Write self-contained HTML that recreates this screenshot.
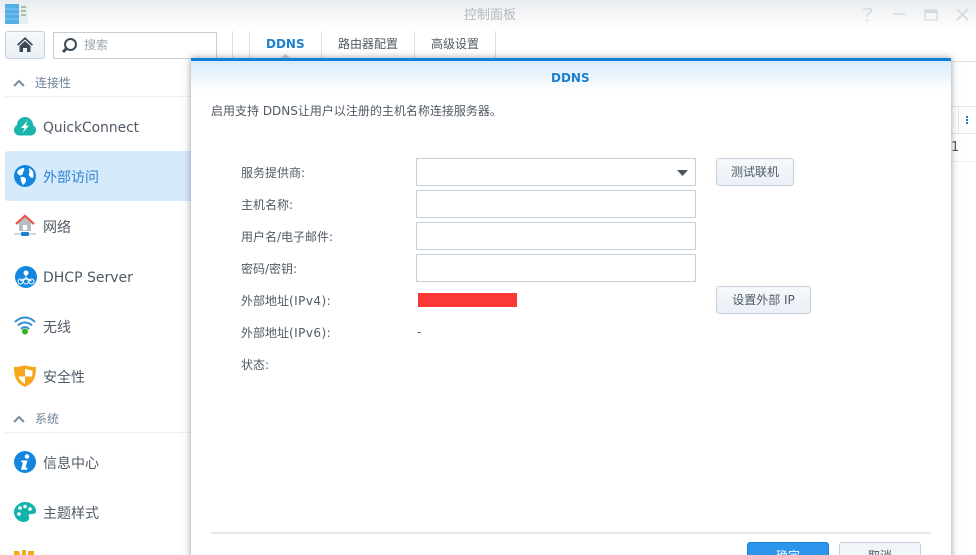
<!DOCTYPE html>
<html><head><meta charset="utf-8">
<style>
html,body{margin:0;padding:0;width:976px;height:555px;overflow:hidden}
body{background:#fff;font-family:"DejaVu Sans","Noto Sans CJK SC",sans-serif;color:#505a64}
#w{position:relative;width:976px;height:555px;overflow:hidden;background:#fff}
.a,.t{position:absolute}
.t{white-space:nowrap;line-height:16px}
.s{font-size:14px;left:43px;color:#505a64}
.h{font-size:12px;left:35px;color:#6d8398}
.l{font-size:12px;left:241px;color:#505a64}
.l span{letter-spacing:.45px}
.i{position:absolute;left:416px;width:278px;height:26px;border:1px solid #c6ced6;background:#fff}
.b{position:absolute;height:26px;border:1px solid #c6d0da;border-radius:3px;background:linear-gradient(#f6f9fc,#e9eff5);font-size:12px;color:#505a64;text-align:center;line-height:26px}
svg{position:absolute;overflow:visible}
</style></head><body><div id="w">
<div class="a" style="left:0;top:0;width:976px;height:30px;background:linear-gradient(#e9ecef,#fff)"></div>
<svg style="left:5px;top:4px" width="24" height="21" viewBox="0 0 24 21"><rect width="14" height="20" y="0" fill="#55aee6"/><rect x="14" width="9" height="20" fill="#e6eef2"/><path d="M0 5h14M0 10h14M0 15h14" stroke="#86c6ee"/><path d="M16 3h5M16 7h5M16 11h5" stroke="#8b9a80" stroke-width="1.200"/></svg>
<div class="t" style="left:464px;top:8px;font-size:13px;color:#b6babe">控制面板</div>
<svg style="left:860px;top:6px" width="110" height="16" viewBox="0 0 110 16" fill="none" stroke="#d6dade" stroke-width="1.600"><path d="M3 3h8v3l-4 3v2M7 13v2"/><path d="M33 8h12"/><path d="M65 4h12v10H65z" stroke-width="1.300"/><path d="M65 5.500h12" stroke-width="3"/><path d="M97 3l11 11M108 3L97 14"/></svg>

<div class="a" style="left:5px;top:31px;width:38px;height:26px;border:1px solid #c6d0da;border-radius:3px;background:linear-gradient(#f6f9fc,#e9eff5)"></div>
<svg style="left:17px;top:37px" width="16" height="15" viewBox="0 0 16 15"><path d="M8 0L0 7.500l1.200 1.300L8 2.500l6.800 6.300L16 7.500z" fill="#3e4a56"/><path d="M2.500 9L8 4l5.500 5v6h-3.500v-4H6v4H2.500z" fill="#3e4a56"/></svg>
<div class="a" style="left:53px;top:32px;width:162px;height:25px;border:1px solid #c6ced6;background:#fff"></div>
<svg style="left:61px;top:37px" width="18" height="18" viewBox="0 0 18 18" fill="none"><circle cx="9.500" cy="7.500" r="5.500" stroke="#3e4a56" stroke-width="2"/><path d="M5.500 11.500L2 15" stroke="#3e4a56" stroke-width="3"/></svg>
<div class="t" style="left:84px;top:37px;font-size:12px;color:#9aa5b0">搜索</div>
<div class="a" style="left:232px;top:31px;width:1px;height:27px;background:#dde1e5"></div>
<div class="a" style="left:249px;top:31px;width:1px;height:27px;background:#dde1e5"></div>
<div class="a" style="left:321px;top:31px;width:1px;height:27px;background:#dde1e5"></div>
<div class="a" style="left:414px;top:31px;width:1px;height:27px;background:#dde1e5"></div>
<div class="a" style="left:495px;top:31px;width:1px;height:27px;background:#dde1e5"></div>
<div class="t" style="left:266px;top:36px;font-size:12px;font-weight:bold;color:#1f7fd0">DDNS</div>
<svg style="left:281px;top:54px" width="9" height="4" viewBox="0 0 9 4"><path d="M0 4L4.500 0 9 4z" fill="#c9ced3"/></svg>
<div class="t" style="left:338px;top:36px;font-size:12px;color:#505a64">路由器配置</div>
<div class="t" style="left:431px;top:36px;font-size:12px;color:#505a64">高级设置</div>

<svg style="left:13px;top:79px" width="12" height="8" viewBox="0 0 12 8" fill="none"><path d="M1 7l5-5 5 5" stroke="#7a8b9b" stroke-width="2"/></svg>
<div class="t h" style="top:75px">连接性</div>
<div class="a" style="left:5px;top:96px;width:186px;height:1px;background:#eceef0"></div>
<svg style="left:14px;top:116px" width="22" height="21" viewBox="0 0 22 21"><circle cx="11" cy="9" r="8" fill="#19b4ac"/><circle cx="5.500" cy="14" r="5.500" fill="#19b4ac"/><circle cx="16.500" cy="14" r="5.500" fill="#19b4ac"/><rect x="5" y="12" width="12" height="7.500" fill="#19b4ac"/><path d="M14 4L7 12h3.500L8.500 17 15 9.500h-3.500z" fill="#fff"/></svg>
<div class="t s" style="top:120px;font-size:13.800px">QuickConnect</div>

<div class="a" style="left:5px;top:151px;width:186px;height:50px;background:#d6eafc;border-radius:3px 0 0 3px"></div>
<svg style="left:14px;top:165px" width="22" height="22" viewBox="0 0 22 22"><circle cx="11" cy="11" r="11" fill="#1387e0"/><path d="M3 7c2-3 5-4 7-4 1 2-1 3-1 5s-3 3-4 2-2-2-2-3zM7 12c2-.5 5 0 5 3s-2 4-3 5c-1-2-2-3-2-4.500S6 12 7 12zM15 3c2 1 4 3 4.500 5 0 2 0 4-.5 5-2 0-3-1-4-2.500s1-2.500.5-4S15 4 15 3z" fill="#fff"/></svg>
<div class="t s" style="top:170px;color:#2c83d6">外部访问</div>

<svg style="left:14px;top:213px" width="22" height="24" viewBox="0 0 22 24"><path d="M5 10l6-5 6 5v8H5z" fill="#b4bfca"/><rect x="9" y="12" width="4" height="5" fill="#fff"/><path d="M2 11l9-8 9 8" fill="none" stroke="#e85a50" stroke-width="2.500"/><path d="M0 21h22" stroke="#9fb0c0"/><rect x="7" y="19" width="8" height="4" fill="#1f7fd0" rx="1"/></svg>
<div class="t s" style="top:220px">网络</div>

<svg style="left:15px;top:266px" width="22" height="22" viewBox="0 0 22 22"><circle cx="11" cy="11" r="11" fill="#1387e0"/><circle cx="11" cy="7" r="2.500" fill="#fff"/><path d="M11 9v4M5.500 15l5.500-3 5.500 3" stroke="#fff" fill="none"/><circle cx="5.500" cy="15.500" r="2.500" fill="none" stroke="#fff"/><circle cx="11" cy="15.500" r="2.500" fill="none" stroke="#fff"/><circle cx="16.500" cy="15.500" r="2.500" fill="none" stroke="#fff"/></svg>
<div class="t s" style="top:270px">DHCP Server</div>

<svg style="left:14px;top:316px" width="22" height="20" viewBox="0 0 22 20" fill="none"><path d="M1 6c6-6 14-6 20 0M4 9.500c4-4 10-4 14 0M7 13c2.500-2.500 5.500-2.500 8 0" stroke="#2e8fd8" stroke-width="2"/><circle cx="11" cy="15.500" r="3" fill="#36b21a"/></svg>
<div class="t s" style="top:320px">无线</div>

<svg style="left:14px;top:365px" width="22" height="23" viewBox="0 0 22 23"><path d="M0 2c7 0 8-1.500 11-1.500S15 2 22 2c0 10-2 16-11 20C2 18 0 12 0 2z" fill="#f5a81c"/><path d="M11 4c3 0 4 1.500 7.500 1.500 0 2-.1 4-.5 6H11zM11 11.500v7.500c-3.500-2-5.500-4.500-6.500-7.500z" fill="#fff"/></svg>
<div class="t s" style="top:370px">安全性</div>

<svg style="left:13px;top:415px" width="12" height="8" viewBox="0 0 12 8" fill="none"><path d="M1 7l5-5 5 5" stroke="#7a8b9b" stroke-width="2"/></svg>
<div class="t h" style="top:411px">系统</div>
<div class="a" style="left:5px;top:432px;width:186px;height:1px;background:#eceef0"></div>
<svg style="left:14px;top:451px" width="22" height="22" viewBox="0 0 22 22"><circle cx="11" cy="11" r="11" fill="#1387e0"/><circle cx="13" cy="5.500" r="2.300" fill="#fff"/><path d="M7.500 9.500h6l-2 7.200h2l-.5 2H7l2-7.400H7z" fill="#fff"/></svg>
<div class="t s" style="top:456px">信息中心</div>
<svg style="left:14px;top:502px" width="22" height="20" viewBox="0 0 22 20"><path d="M11 0c6 0 11 4 11 9 0 3-3 3-5 3s-3 1-2 3-1 5-5 5C4 20 0 15 0 10S5 0 11 0z" fill="#12b3ac"/><circle cx="6" cy="6" r="1.800" fill="#fff"/><circle cx="11" cy="4.500" r="1.800" fill="#fff"/><circle cx="16" cy="7" r="1.800" fill="#fff"/><circle cx="5" cy="12" r="1.800" fill="#fff"/></svg>
<div class="t s" style="top:506px">主题样式</div>
<svg style="left:14px;top:550px" width="20" height="5" viewBox="0 0 20 5"><path d="M0 1l5 0 1 4H0zM8 0h4v5H8zM14 1h6v4h-6z" fill="#f5a81c"/></svg>

<div class="a" style="left:951px;top:61px;width:25px;height:1px;background:#dde1e5"></div>
<div class="a" style="left:951px;top:106px;width:25px;height:1px;background:#e3e6e9"></div>
<div class="a" style="left:951px;top:133px;width:25px;height:1px;background:#e3e6e9"></div>
<div class="a" style="left:958px;top:107px;width:1px;height:26px;background:#e3e6e9"></div>
<div class="a" style="left:966px;top:116px;width:2px;height:2px;background:#1f7fd0;box-shadow:0 3px 0 #1f7fd0,0 6px 0 #1f7fd0"></div>
<div class="t" style="left:951px;top:140px;font-size:13px;color:#505a64">1</div>
<div class="a" style="left:951px;top:161px;width:25px;height:1px;background:#eceef0"></div>

<div class="a" style="left:191px;top:58px;width:760px;height:520px;background:#fff;box-shadow:0 0 7px rgba(60,70,80,.55)"></div>
<div class="a" style="left:191px;top:58px;width:760px;height:3px;background:#0f7fd4"></div>
<div class="a" style="left:191px;top:61px;width:760px;height:30px;background:linear-gradient(#d8ebfb,#fff)"></div>
<div class="t" style="left:551px;top:70px;font-size:12px;font-weight:bold;color:#1f7fd0">DDNS</div>
<div class="t" style="left:211px;top:103px;font-size:12px;color:#505a64">启用支持 DDNS让用户以注册的主机名称连接服务器。</div>

<div class="t l" style="top:165px">服务提供商:</div>
<div class="t l" style="top:197px">主机名称:</div>
<div class="t l" style="top:229px">用户名/电子邮件:</div>
<div class="t l" style="top:261px">密码/密钥:</div>
<div class="t l" style="top:293px">外部地址<span>(IPv4):</span></div>
<div class="t l" style="top:325px">外部地址<span>(IPv6):</span></div>
<div class="t l" style="top:357px">状态:</div>

<div class="i" style="top:158px"></div>
<div class="i" style="top:190px"></div>
<div class="i" style="top:222px"></div>
<div class="i" style="top:254px"></div>
<svg style="left:677px;top:170px" width="11" height="6" viewBox="0 0 11 6"><path d="M0 0h11L5.500 6z" fill="#4a5560"/></svg>
<div class="a" style="left:418px;top:293px;width:99px;height:14px;background:#fb3737"></div>
<div class="t" style="left:417px;top:324px;font-size:12px;color:#505a64">-</div>

<div class="b" style="left:716px;top:158px;width:76px">测试联机</div>
<div class="b" style="left:716px;top:286px;width:93px">设置外部 IP</div>

<div class="a" style="left:211px;top:532px;width:720px;height:2px;background:#e6e9ec"></div>
<div class="a" style="left:747px;top:542px;width:80px;height:13px;overflow:hidden;border:1px solid #1b80d0;border-bottom:0;border-radius:3px 3px 0 0;background:#2a95ea;color:#fff;font-size:12px;text-align:center;line-height:26px">确定</div>
<div class="a" style="left:839px;top:542px;width:80px;height:13px;overflow:hidden;border:1px solid #c6d0da;border-bottom:0;border-radius:3px 3px 0 0;background:#f1f5f9;color:#505a64;font-size:12px;text-align:center;line-height:26px">取消</div>
</div></body></html>
